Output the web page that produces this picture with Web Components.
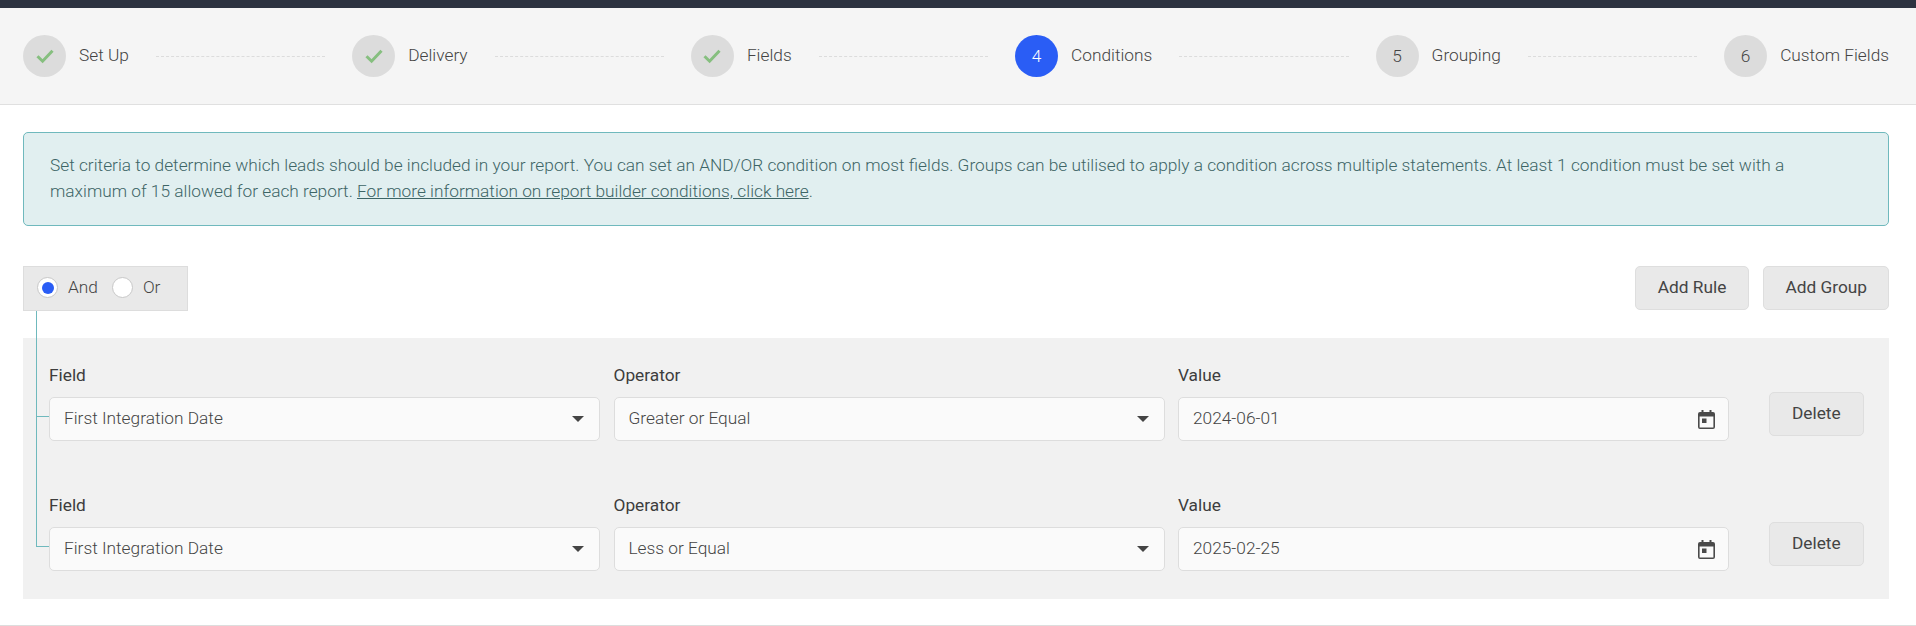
<!DOCTYPE html>
<html lang="en">
<head>
<meta charset="utf-8">
<title>Report Builder</title>
<style>
  html, body { margin: 0; padding: 0; background: #fff; }
  body { font-family: Roboto, "Liberation Sans", sans-serif; color: #444; overflow: hidden; }
</style>
</head>
<body>
<report-stepper>
  <step-item state="done">Set Up</step-item>
  <step-item state="done">Delivery</step-item>
  <step-item state="done">Fields</step-item>
  <step-item state="active" number="4">Conditions</step-item>
  <step-item number="5">Grouping</step-item>
  <step-item number="6">Custom Fields</step-item>
</report-stepper>

<report-body>
  <info-banner>
    Set criteria to determine which leads should be included in your report. You can set an AND/OR condition on most fields. Groups can be utilised to apply a condition across multiple statements. At least 1 condition must be set with a<br>maximum of 15 allowed for each report. <a href="#conditions">For more information on report builder conditions, click here</a>.
  </info-banner>

  <condition-toolbar>
    <radio-option checked>And</radio-option>
    <radio-option>Or</radio-option>
    <app-button slot="actions" style="--button-padding: 22px">Add Rule</app-button>
    <app-button slot="actions">Add Group</app-button>
  </condition-toolbar>

  <rule-group>
    <rule-row>
      <field-box label="Field" value="First Integration Date"></field-box>
      <field-box label="Operator" value="Greater or Equal"></field-box>
      <field-box label="Value" value="2024-06-01" type="date"></field-box>
      <app-button slot="actions" style="--button-padding: 22px">Delete</app-button>
    </rule-row>
    <rule-row last>
      <field-box label="Field" value="First Integration Date"></field-box>
      <field-box label="Operator" value="Less or Equal"></field-box>
      <field-box label="Value" value="2025-02-25" type="date"></field-box>
      <app-button slot="actions" style="--button-padding: 22px">Delete</app-button>
    </rule-row>
  </rule-group>
</report-body>

<script>
const CHECK_ICON = `<svg width="20" height="16" viewBox="0 0 20 16" aria-hidden="true">
  <path d="M2.5 8.2 7.6 13.2 17.5 2.8" fill="none" stroke="#86bf7f" stroke-width="3"/>
</svg>`;

const CALENDAR_ICON = `<svg width="17" height="19" viewBox="0 0 17 19" aria-hidden="true">
  <path fill="#4a4a4a" d="M3.5 0h2v2h6V0h2v2H15a2 2 0 0 1 2 2v13a2 2 0 0 1-2 2H2a2 2 0 0 1-2-2V4a2 2 0 0 1 2-2h1.5V0ZM1.6 6.5v10.9h13.8V6.5H1.6Z"/>
  <rect x="4" y="8.5" width="4.5" height="4.5" fill="#4a4a4a"/>
</svg>`;

class ShadowElement extends HTMLElement {
    constructor() {
        super();
        this.attachShadow({ mode: 'open' });
    }

    connectedCallback() {
        this.render();
    }
}

class ReportStepper extends ShadowElement {
    render() {
        this.shadowRoot.innerHTML = `
      <style>
        :host {
          display: block;
          border-top: 8px solid #2d3340;
          border-bottom: 1px solid #e0e0e0;
          background: #f5f5f5;
        }
        .steps {
          display: flex;
          align-items: center;
          height: 96px;
          padding: 0 27px 0 23px;
        }
      </style>
      <div class="steps"><slot></slot></div>
    `;
    }
}

class StepItem extends ShadowElement {
    render() {
        const state = this.getAttribute('state');
        const badge = state === 'done' ? CHECK_ICON : this.getAttribute('number');

        this.shadowRoot.innerHTML = `
      <style>
        :host {
          display: flex;
          flex: 1 1 auto;
          align-items: center;
          font-size: 17.3px;
          font-weight: 300;
          color: #444;
        }
        :host(:last-child) { flex: none; }
        .badge {
          display: flex;
          flex: none;
          align-items: center;
          justify-content: center;
          width: 43px;
          height: 42px;
          border-radius: 50%;
          background: #dcdcdc;
        }
        .badge[data-state="active"] {
          background: #2a5df5;
          color: #fff;
        }
        .label {
          margin-left: 13px;
          padding-bottom: 2px;
          white-space: nowrap;
        }
        .line {
          flex: 1;
          margin: 0 27px;
          border-top: 1px dashed #dcdcdc;
        }
        :host(:last-child) .line { display: none; }
      </style>
      <span class="badge" data-state="${state || ''}">${badge}</span>
      <span class="label"><slot></slot></span>
      <span class="line"></span>
    `;
    }
}

class ReportBody extends ShadowElement {
    render() {
        this.shadowRoot.innerHTML = `
      <style>
        :host {
          display: block;
          padding: 27px 27px 26px 23px;
          border-bottom: 1px solid #ddd;
        }
      </style>
      <slot></slot>
    `;
    }
}

class InfoBanner extends ShadowElement {
    render() {
        this.shadowRoot.innerHTML = `
      <style>
        :host {
          display: block;
          box-sizing: border-box;
          height: 94px;
          padding: 19px 26px;
          border: 1px solid #6fb9bd;
          border-radius: 5px;
          background: #e1eff0;
          font-size: 17.3px;
          font-weight: 300;
          line-height: 26px;
          color: #3d6566;
        }
        ::slotted(a) { color: inherit; text-decoration: underline; }
      </style>
      <slot></slot>
    `;
    }
}

class ConditionToolbar extends ShadowElement {
    render() {
        this.shadowRoot.innerHTML = `
      <style>
        :host {
          display: flex;
          align-items: flex-start;
          justify-content: space-between;
          margin-top: 40px;
          height: 72px;
        }
        .mode {
          display: flex;
          box-sizing: border-box;
          align-items: center;
          gap: 14px;
          width: 165px;
          height: 45px;
          padding: 0 13px 2px;
          border: 1px solid #ddd;
          background: #e9e9e9;
        }
        .actions {
          display: flex;
          gap: 14px;
          height: 44px;
        }
      </style>
      <div class="mode"><slot></slot></div>
      <div class="actions"><slot name="actions"></slot></div>
    `;
    }
}

class RadioOption extends ShadowElement {
    render() {
        const isChecked = this.hasAttribute('checked');

        this.shadowRoot.innerHTML = `
      <style>
        :host {
          display: inline-flex;
          align-items: center;
          gap: 10px;
          font-size: 17.3px;
          font-weight: 300;
          color: #444;
        }
        .dot {
          display: flex;
          box-sizing: border-box;
          align-items: center;
          justify-content: center;
          width: 21px;
          height: 21px;
          border: 1px solid #c8c8c8;
          border-radius: 50%;
          background: #fff;
        }
        .dot i {
          width: 12px;
          height: 12px;
          border-radius: 50%;
          background: #2a5df5;
        }
        .text { padding-bottom: 2px; }
      </style>
      <span class="dot">${isChecked ? '<i></i>' : ''}</span>
      <span class="text"><slot></slot></span>
    `;
    }
}

class AppButton extends ShadowElement {
    render() {
        this.shadowRoot.innerHTML = `
      <style>
        :host {
          display: inline-flex;
          box-sizing: border-box;
          align-items: center;
          justify-content: center;
          padding: 0 var(--button-padding, 21px) 2px;
          border: 1px solid #dedede;
          border-radius: 5px;
          background: #e9e9e9;
          font-size: 17.3px;
          font-weight: 400;
          color: #444;
          cursor: pointer;
        }
      </style>
      <slot></slot>
    `;
    }
}

class RuleGroup extends ShadowElement {
    render() {
        this.shadowRoot.innerHTML = `
      <style>
        :host {
          position: relative;
          display: block;
          box-sizing: border-box;
          height: 261px;
          padding-top: 28px;
          background: #f1f1f1;
        }
        .trunk {
          position: absolute;
          top: -27px;
          left: 13px;
          width: 1px;
          height: 236px;
          background: #6fb9bd;
        }
      </style>
      <span class="trunk"></span>
      <slot></slot>
    `;
    }
}

class RuleRow extends ShadowElement {
    render() {
        this.shadowRoot.innerHTML = `
      <style>
        :host {
          position: relative;
          display: grid;
          grid-template-columns: 551px 551px 551px auto;
          column-gap: 13.5px;
          align-items: start;
          height: 130px;
          padding-left: 26px;
        }
        .branch {
          position: absolute;
          left: 13px;
          top: 50px;
          width: 13px;
          height: 1px;
          background: #6fb9bd;
        }
        .action {
          display: flex;
          height: 44px;
          margin-top: 26px;
          margin-left: 26.5px;
        }
      </style>
      <span class="branch"></span>
      <slot></slot>
      <div class="action"><slot name="actions"></slot></div>
    `;
    }
}

class FieldBox extends ShadowElement {
    render() {
        const isDate = this.getAttribute('type') === 'date';
        const icon = isDate
            ? CALENDAR_ICON
            : '<span class="caret"></span>';

        this.shadowRoot.innerHTML = `
      <style>
        :host {
          display: block;
          font-size: 17.3px;
          color: #444;
        }
        .label {
          display: block;
          height: 31px;
          margin-top: -1px;
          margin-bottom: 1px;
          line-height: 20px;
          font-weight: 400;
          color: #3d3d3d;
        }
        .control {
          display: flex;
          box-sizing: border-box;
          align-items: center;
          justify-content: space-between;
          height: 44px;
          padding: 0 9px 0 14px;
          border: 1px solid #ddd;
          border-radius: 5px;
          background: #fafafa;
          font-weight: 300;
        }
        .control[data-type="date"] { padding-right: 13px; }
        .control > span:first-child { padding-bottom: 2px; }
        .caret {
          width: 0;
          height: 0;
          margin-right: 6px;
          border-top: 6px solid #444;
          border-left: 6px solid transparent;
          border-right: 6px solid transparent;
        }
      </style>
      <span class="label">${this.getAttribute('label')}</span>
      <div class="control" data-type="${this.getAttribute('type') || 'select'}">
        <span>${this.getAttribute('value')}</span>
        ${icon}
      </div>
    `;
    }
}

customElements.define('report-stepper', ReportStepper);
customElements.define('step-item', StepItem);
customElements.define('report-body', ReportBody);
customElements.define('info-banner', InfoBanner);
customElements.define('condition-toolbar', ConditionToolbar);
customElements.define('radio-option', RadioOption);
customElements.define('app-button', AppButton);
customElements.define('rule-group', RuleGroup);
customElements.define('rule-row', RuleRow);
customElements.define('field-box', FieldBox);
</script>
</body>
</html>
